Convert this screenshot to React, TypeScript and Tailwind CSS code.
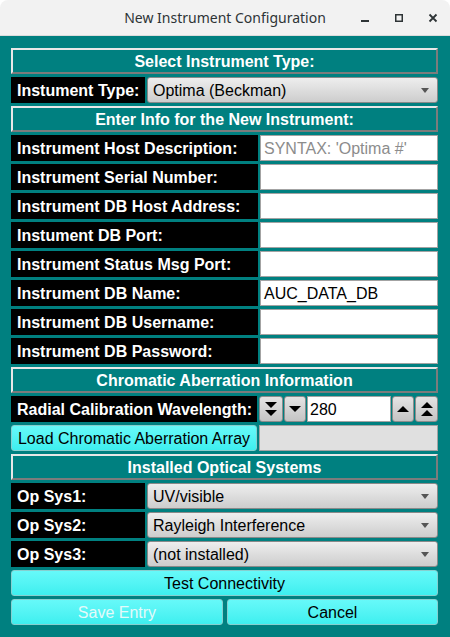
import React from 'react';

const font = { fontFamily: '"Liberation Sans", Arial, sans-serif' };

const textRows = [
  { label: 'Instrument Host Description:', value: '', placeholder: "SYNTAX: 'Optima #'" },
  { label: 'Instrument Serial Number:', value: '' },
  { label: 'Instrument DB Host Address:', value: '' },
  { label: 'Instument DB Port:', value: '' },
  { label: 'Instrument Status Msg Port:', value: '' },
  { label: 'Instrument DB Name:', value: 'AUC_DATA_DB' },
  { label: 'Instrument DB Username:', value: '' },
  { label: 'Instrument DB Password:', value: '' },
];

const opSystems = [
  { label: 'Op Sys1:', value: 'UV/visible' },
  { label: 'Op Sys2:', value: 'Rayleigh Interference' },
  { label: 'Op Sys3:', value: '(not installed)' },
];

function Header({ children }: { children: React.ReactNode }) {
  return (
    <div className="h-[26px] pt-[1px] flex items-center justify-center border-t-2 border-l-2 border-b-2 border-r-2 border-t-[#e8e8e8] border-l-[#e8e8e8] border-b-[#7c7c7c] border-r-[#7c7c7c] text-white font-bold text-[16px]">
      {children}
    </div>
  );
}

function Label({ children, className = '' }: { children: React.ReactNode; className?: string }) {
  return (
    <div className={`h-[26px] pt-[2px] bg-black text-white font-bold text-[16px] flex items-center pl-[6px] whitespace-nowrap ${className}`}>
      {children}
    </div>
  );
}

function Combo({ value }: { value: string }) {
  return (
    <div className="flex-1 h-[26px] flex items-center justify-between pl-[5px] pr-[8px] rounded-[3px] border border-[#8a8a8a] bg-gradient-to-b from-[#eeeeee] to-[#cdcdcd] text-[16px] text-black">
      <span className="pt-[2px]">{value}</span>
      <svg width="8" height="5" viewBox="0 0 8 5">
        <path d="M0 0 L8 0 L4 5 Z" fill="#555" />
      </svg>
    </div>
  );
}

function Arrow({ dir, double }: { dir: 'up' | 'down'; double?: boolean }) {
  const tri = (y: number) =>
    dir === 'down' ? `M3 ${y} L15 ${y} L9 ${y + 6} Z` : `M3 ${y + 6} L15 ${y + 6} L9 ${y} Z`;
  return (
    <div className="h-[26px] flex items-center justify-center rounded-[3px] border border-[#8c8c8c] bg-gradient-to-b from-[#e4e4e4] to-[#c4c4c4]">
      <svg width="18" height="18" viewBox="0 0 18 18">
        {double ? (
          <>
            <path d={tri(2)} fill="#000" />
            <path d={tri(10)} fill="#000" />
          </>
        ) : (
          <path d={tri(6)} fill="#000" />
        )}
      </svg>
    </div>
  );
}

function CyanButton({ children, className = '', muted }: { children: React.ReactNode; className?: string; muted?: boolean }) {
  return (
    <div
      className={`h-[26px] pt-[2px] flex items-center justify-center rounded-[3px] border border-[#86cfcf] bg-gradient-to-b from-[#66f9f9] to-[#3defef] text-[16px] ${muted ? 'text-[#e4fafa]' : 'text-black'} ${className}`}
    >
      {children}
    </div>
  );
}

export default function App() {
  return (
    <div className="w-[450px] h-[637px] bg-white overflow-hidden" style={font}>
      <div className="h-[36px] bg-[#f2f2f2] rounded-t-[8px] relative flex items-center justify-center border-b border-[#dcdcdc]">
        <span className="text-[14px] text-[#2e3436]" style={{ fontFamily: '"Noto Sans", "Open Sans", sans-serif' }}>
          New Instrument Configuration
        </span>
        <div className="absolute right-[12px] top-0 h-full flex items-center gap-[24px]">
          <svg width="10" height="10" viewBox="0 0 10 10">
            <rect x="1" y="7" width="8" height="2" fill="#2e3436" />
          </svg>
          <svg width="10" height="10" viewBox="0 0 10 10">
            <rect x="1.75" y="1.75" width="6.5" height="6.5" fill="none" stroke="#2e3436" strokeWidth="1.5" />
          </svg>
          <svg width="10" height="10" viewBox="0 0 10 10">
            <path d="M1.5 1.5 L8.5 8.5 M8.5 1.5 L1.5 8.5" stroke="#2e3436" strokeWidth="1.8" />
          </svg>
        </div>
      </div>

      <div className="h-[601px] bg-[#008080] px-[11px] pt-[12px] pr-[12px] flex flex-col gap-[3px]">
        <Header>Select Instrument Type:</Header>
        <div className="flex gap-[2px]">
          <Label className="w-[134px]">Instument Type:</Label>
          <Combo value="Optima (Beckman)" />
        </div>

        <Header>Enter Info for the New Instrument:</Header>
        {textRows.map((r) => (
          <div key={r.label} className="flex gap-[2px]">
            <Label className="w-[247px]">{r.label}</Label>
            <div className="flex-1 h-[26px] pt-[2px] bg-white border border-[#a3a3a3] flex items-center px-[3px] text-[16px]">
              {r.value ? (
                <span className="text-black">{r.value}</span>
              ) : (
                <span className="text-[#8c8c8c]">{r.placeholder}</span>
              )}
            </div>
          </div>
        ))}

        <Header>Chromatic Aberration Information</Header>
        <div className="flex gap-[1px]">
          <Label className="w-[246px] mr-[1px]">Radial Calibration Wavelength:</Label>
          <div className="w-[24px]">
            <Arrow dir="down" double />
          </div>
          <div className="w-[22px]">
            <Arrow dir="down" />
          </div>
          <div className="flex-1 h-[26px] pt-[2px] bg-white border border-[#a3a3a3] flex items-center px-[2px] text-[16px] text-black">
            280
          </div>
          <div className="w-[22px]">
            <Arrow dir="up" />
          </div>
          <div className="w-[23px]">
            <Arrow dir="up" double />
          </div>
        </div>
        <div className="flex gap-[2px]">
          <CyanButton className="w-[246px]">Load Chromatic Aberration Array</CyanButton>
          <div className="flex-1 h-[26px] bg-[#e0e0e0] border border-[#a3a3a3]" />
        </div>

        <Header>Installed Optical Systems</Header>
        {opSystems.map((o) => (
          <div key={o.label} className="flex gap-[2px]">
            <Label className="w-[134px]">{o.label}</Label>
            <Combo value={o.value} />
          </div>
        ))}

        <CyanButton>Test Connectivity</CyanButton>
        <div className="flex gap-[4px]">
          <CyanButton className="w-[212px]" muted>
            Save Entry
          </CyanButton>
          <CyanButton className="flex-1">Cancel</CyanButton>
        </div>
      </div>
    </div>
  );
}
